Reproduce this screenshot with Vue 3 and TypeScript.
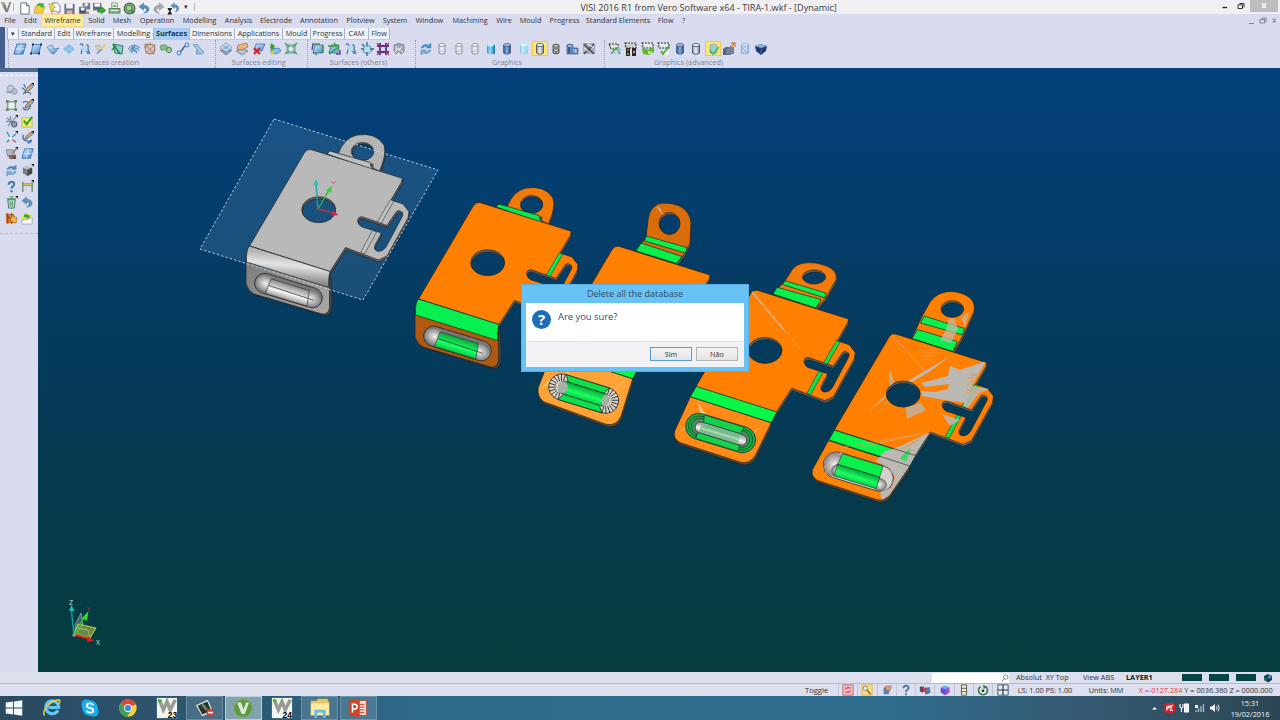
<script setup lang="ts">
import { ref } from 'vue'

interface Item {
  label: string
  w: number
  active?: boolean
}

interface Group {
  label: string
  w: number
  icons: string[]
  on?: number
}

const quickIcons = ['new', 'open', 'docs', 'save', 'saveall', 'export', 'print', 'preview', 'undo', 'redo', 'history']

const menus: Item[] = [
  { label: 'File', w: 20 },
  { label: 'Edit', w: 21 },
  { label: 'Wireframe', w: 43, active: true },
  { label: 'Solid', w: 25 },
  { label: 'Mesh', w: 26 },
  { label: 'Operation', w: 44 },
  { label: 'Modelling', w: 41 },
  { label: 'Analysis', w: 37 },
  { label: 'Electrode', w: 38 },
  { label: 'Annotation', w: 48 },
  { label: 'Plotview', w: 35 },
  { label: 'System', w: 34 },
  { label: 'Window', w: 35 },
  { label: 'Machining', w: 46 },
  { label: 'Wire', w: 22 },
  { label: 'Mould', w: 31 },
  { label: 'Progress', w: 37 },
  { label: 'Standard Elements', w: 70 },
  { label: 'Flow', w: 25 },
  { label: '?', w: 11 },
]

const tabs: Item[] = [
  { label: 'Standard', w: 36 },
  { label: 'Edit', w: 19 },
  { label: 'Wireframe', w: 40 },
  { label: 'Modelling', w: 40 },
  { label: 'Surfaces', w: 36, active: true },
  { label: 'Dimensions', w: 45 },
  { label: 'Applications', w: 48 },
  { label: 'Mould', w: 28 },
  { label: 'Progress', w: 34 },
  { label: 'CAM', w: 24 },
  { label: 'Flow', w: 21 },
]

const groups: Group[] = [
  {
    label: 'Surfaces creation',
    w: 207,
    icons: ['sheet', 'sheetpts', 'fold', 'diamond', 'loft', 'brush', 'greenframe', 'waves', 'net', 'sweep', 'link', 'pipes'],
  },
  { label: 'Surfaces editing', w: 92, icons: ['stack', 'stackhand', 'delsheet', 'extend', 'stretch'] },
  { label: 'Surfaces (others)', w: 108, icons: ['arrows1', 'arrows2', 'loft', 'cross', 'grid', 'blob'] },
  {
    label: 'Graphics',
    w: 189,
    icons: ['refresh', 'cyl0', 'cyl0', 'cyl0', 'cylcyan', 'cylblue', 'cylpale', 'cylgrey', 'cylmesh', 'cylpair', 'tools'],
    on: 7,
  },
  {
    label: 'Graphics (advanced)',
    w: 174,
    icons: ['cubenet', 'cubelight', 'cubegreen', 'cubecheck', 'cylblue', 'cylgrey', 'cylcheck', 'steps', 'cylpale2', 'cubeblue'],
    on: 6,
  },
]

const sideIcons = [
  'gears', 'pen', 'frame', 'pencurve', 'gearcut', 'check', 'axes', 'penarc', 'palette',
  'sheet', 'refresh', 'solid', 'help', 'dim', 'bin', 'undo', 'heat', 'landscape',
]

const statusIcons = ['redview', 'zoomy', 'hand', 'help', 'cubered', 'cubeviolet', 'list', 'spin', 'target']

const tasks = [
  { icon: 't-win' },
  { icon: 't-ie' },
  { icon: 't-skype' },
  { icon: 't-chrome' },
  { icon: 't-w', num: '23' },
  { icon: 't-cam', state: 'open' },
  { icon: 't-visi', state: 'focus' },
  { icon: 't-w', num: '24' },
  { icon: 't-files', state: 'open' },
  { icon: 't-ppt', state: 'open' },
]

// Stages with the front flange already bent
const bent = [
  { dx: 0, dy: 0, plate: '#b9b9b9', face: 'url(#g-steel)', roll: 'url(#g-rollgrey)', ear: '#b5b5b5', strip: '#c0c0c0', pill: 'url(#g-pillgrey)' },
  { dx: 169, dy: 53, plate: '#ff8000', face: '#b05a10', roll: '#08f050', ear: '#f07a08', strip: '#08e850', pill: 'url(#g-pillgreen)' },
]

// Flat stages, flap and pocket change a little from one to the next
const flat = [
  { dx: 307.7, dy: 96.7, flap: 'M244,256 L230.5,291 Q229,300 236,305 L298,327.500 Q309,330 313.500,319 L325,282Z', fill: '#ffa336', px: 276, py: 297, kind: 'ribs' },
  { dx: 446.3, dy: 140.7, flap: 'M244,256 L228.5,290 Q226,298 234,302 L294,321.500 Q303,324 309,315 L325,282Z', fill: '#ff8b16', px: 274.3, py: 292.3, kind: 'rings' },
  { dx: 584.5, dy: 184.4, flap: 'M244,256 L228,285 Q226,292 233,296 L293,315.500 Q301,317 305,310 L325,282Z', fill: '#ff8306', px: 273.8, py: 287.3, kind: 'smooth' },
]

const ears = [
  {
    d: 'M636,251 L646,237 L648.300,218 Q651,204 663,203 Q688,203 691,222 L690,243 L685,253 L676.500,264Z M659,223.500 a10.500,11 0 1 0 21,0 a10.500,11 0 1 0 -21,0Z',
    fill: '#d96d0c',
    strips: ['646,236 687,247.500 685.500,253 644.500,241', '641,243 682,256.500 676.500,263.500 636,251'],
  },
  {
    d: 'M773,294 L785,280.700 L793,268.500 Q800,261 816,263 Q838,267 836.500,279 L825.700,298 L815.700,308.500Z M802.500,277 a11.500,7 0 1 0 23,0 a11.500,7 0 1 0 -23,0Z',
    fill: '#f27b0c',
    strips: ['785,280.700 826,293 825,298 782.500,284.500', '777,287.300 821,299.500 815.700,308 773,294'],
  },
  {
    d: 'M912,338 L921.700,317 L930,302 Q938,290 955,291.700 Q977,296 974,311 L963.300,335 L953.300,352Z M941,309 a11.300,8.300 0 1 0 22.600,0 a11.300,8.300 0 1 0 -22.600,0Z',
    fill: '#ff8000',
    strips: ['924,316 964.500,328.500 962.500,335 920.500,323', '917.500,329.500 957.500,341.500 952.800,351.500 912,338.500'],
  },
]

// Short radial lines around the rounded ends of the ribbed pocket
const ribs = Array.from({ length: 22 }, (_, i) => {
  const left = i < 11
  const a = ((left ? 90 : -90) + (i % 11) * 18) * (Math.PI / 180)
  const cx = left ? -23 : 23
  return { x1: cx + 6 * Math.cos(a), y1: 6 * Math.sin(a), x2: cx + 13 * Math.cos(a), y2: 13 * Math.sin(a) }
})

const dialogOpen = ref(true)
</script>

<template>
  <div class="screen">
    <!-- Icon sheet -->
    <svg class="defs" width="0" height="0">
      <defs>
        <linearGradient id="g-blue" x1="0" y1="0" x2="1" y2="1">
          <stop offset="0" stop-color="#d4ecfc" />
          <stop offset="1" stop-color="#4a8ccc" />
        </linearGradient>
        <linearGradient id="g-cyl" x1="0" x2="1">
          <stop offset="0" stop-color="#2a4c86" />
          <stop offset="0.5" stop-color="#86b4e4" />
          <stop offset="1" stop-color="#20406e" />
        </linearGradient>
        <linearGradient id="g-cyan" x1="0" x2="1">
          <stop offset="0" stop-color="#2a98d4" />
          <stop offset="0.4" stop-color="#9adcf8" />
          <stop offset="1" stop-color="#1070b0" />
        </linearGradient>
        <linearGradient id="g-grey" x1="0" x2="1">
          <stop offset="0" stop-color="#8c98a4" />
          <stop offset="0.5" stop-color="#eef2f4" />
          <stop offset="1" stop-color="#707c88" />
        </linearGradient>
        <linearGradient id="g-steel" x1="0" y1="0" x2="1" y2="1">
          <stop offset="0" stop-color="#777" />
          <stop offset="1" stop-color="#aaa" />
        </linearGradient>
        <linearGradient id="g-rollgrey" x1="0.55" y1="0.2" x2="0.42" y2="0.85">
          <stop offset="0" stop-color="#b4b4b4" />
          <stop offset="0.4" stop-color="#e4e4e4" />
          <stop offset="1" stop-color="#808080" />
        </linearGradient>
        <linearGradient id="g-pillgrey" x1="0" y1="0" x2="0" y2="1">
          <stop offset="0" stop-color="#8a8a8a" />
          <stop offset="0.6" stop-color="#f4f4f4" />
          <stop offset="1" stop-color="#9a9a9a" />
        </linearGradient>
        <linearGradient id="g-pillgreen" x1="0" y1="0" x2="0" y2="1">
          <stop offset="0" stop-color="#06a83a" />
          <stop offset="0.6" stop-color="#1cff60" />
          <stop offset="1" stop-color="#08c848" />
        </linearGradient>
        <radialGradient id="g-dome">
          <stop offset="0" stop-color="#f4f0f0" />
          <stop offset="1" stop-color="#858383" />
        </radialGradient>
      </defs>

      <symbol id="visi" viewBox="0 0 14 14"><path d="M1,1H5L7.500,9L10,1H12L8.500,12H6Z" fill="#7c827c" /><path d="M1,1H5L6,4H2Z" fill="#a6b29c" /></symbol>
      <symbol id="new" viewBox="0 0 14 14"><path d="M3,1H9L12,4V13H3Z" fill="#fff" stroke="#5a6884" /><path d="M9,1V4H12" fill="#dde" stroke="#5a6884" /></symbol>
      <symbol id="open" viewBox="0 0 14 14"><path d="M1,12L3,4H7L8,5H13L10,12Z" fill="#f3cf3e" stroke="#b08a20" stroke-width=".6" /><path d="M4,4C5,0 9,1 10,2L12,1L11,6L7,5L9,3.500Z" fill="#38b030" /></symbol>
      <symbol id="docs" viewBox="0 0 14 14"><path d="M5,1H10L13,4V11H5Z" fill="#fff" stroke="#68748c" /><path d="M1,2H5L8,6L5,7L7,10H3Z" fill="#f4d04c" stroke="#a58a34" stroke-width=".5" /><path d="M4,10H11V13H4Z" fill="#eef" stroke="#68748c" stroke-width=".6" /></symbol>
      <symbol id="save" viewBox="0 0 14 14"><path d="M1.500,2H12.500V13H1.500Z" fill="#66738e" /><path d="M3.500,2H10.500V7H3.500Z" fill="#f4f4f8" /><path d="M4,9H10V13H4Z" fill="#d8b898" /></symbol>
      <symbol id="saveall" viewBox="0 0 14 14"><path d="M5,1H13V8H5Z" fill="#66738e" /><path d="M7,1.500H11V4H7Z" fill="#fff" /><path d="M1,5H9V13H1Z" fill="#4a5670" stroke="#e8e8f0" stroke-width=".6" /><path d="M3,6H7V9H3Z" fill="#fff" /><path d="M9,10H12V13H9Z" fill="#bb8850" /></symbol>
      <symbol id="export" viewBox="0 0 14 14"><path d="M0,1H9V9H0Z" fill="#60708a" /><path d="M1.500,1.500H7.500V5H1.500Z" fill="#fff" /><path d="M5,7H9V5L14,9L9,13V11H5Z" fill="#34a82e" stroke="#1d701a" stroke-width=".5" /></symbol>
      <symbol id="print" viewBox="0 0 14 14"><path d="M4,1H10V7H4Z" fill="#fff" stroke="#50885a" stroke-width=".8" /><path d="M5,3.500H9M5,5H9" stroke="#48a858" /><path d="M1,7H13V12H1Z" fill="#80bc88" stroke="#406048" stroke-width=".7" /><path d="M3,9H11" stroke="#e8ffe8" /></symbol>
      <symbol id="preview" viewBox="0 0 14 14"><circle cx="7" cy="7" r="5.800" fill="#78b070" stroke="#52605a" stroke-width="1.300" /><circle cx="6.500" cy="6.500" r="3" fill="#a9d3a0" stroke="#3f9040" /><path d="M9,9L12,12" stroke="#5c6458" stroke-width="2" /></symbol>
      <symbol id="undo" viewBox="0 0 14 14"><path d="M6,1L1,5L6,9V6.500C10,6.500 10,10 6,12C14,12 14,3.500 6,3.500Z" fill="#5d90c0" stroke="#45709c" stroke-width=".5" /></symbol>
      <symbol id="redo" viewBox="0 0 14 14"><path d="M8,1L13,5L8,9V6.500C4,6.500 4,10 8,12C0,12 0,3.500 8,3.500Z" fill="#a8acb0" stroke="#83888e" stroke-width=".5" /></symbol>
      <symbol id="history" viewBox="0 0 14 14"><path d="M8,1L4,4L8,7V5.500C11,5.500 11,9 9,11C14,10 14,3 8,3Z" fill="#5d90c0" stroke="#45709c" stroke-width=".4" /><path d="M1,7H5L3,10L5,13H1L3,10Z" fill="#222" stroke="#222" /></symbol>

      <symbol id="sheet" viewBox="0 0 14 14"><path d="M4,2H13L10,12H1Z" fill="url(#g-blue)" stroke="#2b63a8" stroke-width=".9" /><path d="M8.500,2L5.500,12M2.500,7H11.500" stroke="#f6fbff" stroke-width=".7" /></symbol>
      <symbol id="sheetpts" viewBox="0 0 14 14"><path d="M4,2.500H12L10,11.500H2Z" fill="url(#g-blue)" stroke="#2b63a8" stroke-width=".7" /><path d="M3,1.500h2v2h-2zM11,1.500h2v2h-2zM1,10.500h2v2h-2zM9,10.500h2v2h-2z" fill="#1c3354" /></symbol>
      <symbol id="fold" viewBox="0 0 14 14"><path d="M1,5L6,3L8,7L13,6L8,12Q4,12 3,8Z" fill="url(#g-blue)" stroke="#4a82a8" stroke-width=".7" /></symbol>
      <symbol id="diamond" viewBox="0 0 14 14"><path d="M7,2L13,7L7,12L1,7Z" fill="#82bce8" stroke="#a8d0f0" /><path d="M4,4.500L10,9.500M10,4.500L4,9.500" stroke="#b8dcf4" stroke-width=".6" /></symbol>
      <symbol id="loft" viewBox="0 0 14 14"><path d="M2,3Q4,0 5,4L3,12M8,3Q11,2 10,7L12,12M5,6L9,10" fill="none" stroke="#4a78a8" stroke-width="1.300" /><path d="M3,4L8,4L9,9L5,10Z" fill="#b8dcf0" /><path d="M9,9h3v3h-3z" fill="#5890c0" /></symbol>
      <symbol id="brush" viewBox="0 0 14 14"><path d="M1,4L5,3L8,7L5,9Z" fill="#d8d8a0" stroke="#8894a0" stroke-width=".5" /><path d="M7,8L12,2" stroke="#e8d070" stroke-width="2" /><path d="M3,12Q5,8 8,8" fill="none" stroke="#6898c8" stroke-width="1.500" /></symbol>
      <symbol id="greenframe" viewBox="0 0 14 14"><path d="M2,2L12,4L11,12L4,11Z" fill="#92c8e8" stroke="#2a7c48" stroke-width="1" /><path d="M2,2L9,12M1,8L5,4" stroke="#208c34" stroke-width="1.500" /></symbol>
      <symbol id="waves" viewBox="0 0 14 14"><path d="M1,7L8,2L13,7L7,12Z" fill="#b4d4ec" /><path d="M1,7Q6,0 13,6M2,9Q6,3 12,8M4,11Q7,6 10,10M4,4L10,11M8,3L4,10" fill="none" stroke="#3c7ab4" stroke-width=".9" /></symbol>
      <symbol id="net" viewBox="0 0 14 14"><path d="M2,2L12,3L11,12L3,11Z" fill="#c8ccd8" stroke="#b07c58" /><path d="M2,2L11,12M12,3L3,11M1,6L8,1M6,13L13,7" stroke="#c07848" stroke-width="1" /></symbol>
      <symbol id="sweep" viewBox="0 0 14 14"><path d="M1,4Q6,1 9,5L12,6L10,11L7,8H2Z" fill="#7cc47c" stroke="#5a8a70" stroke-width=".7" /><circle cx="10" cy="8" r="2.500" fill="#a8d0a0" stroke="#4a785c" /></symbol>
      <symbol id="link" viewBox="0 0 14 14"><path d="M3,11L6,8L8,5L11,3" fill="none" stroke="#3c608c" stroke-width="1.500" /><circle cx="11" cy="3" r="2" fill="#cbe2f8" stroke="#3c78b4" /><circle cx="3" cy="11" r="2" fill="#cbe2f8" stroke="#3c78b4" /></symbol>
      <symbol id="pipes" viewBox="0 0 14 14"><path d="M1,3Q6,1 8,5L12,10L10,12H4L5,7Z" fill="#8cb8dc" stroke="#6080a4" stroke-width=".6" /><path d="M3,3L10,11M6,3L12,9" stroke="#e0f0fc" stroke-width=".7" /></symbol>
      <symbol id="stack" viewBox="0 0 14 14"><path d="M1,8L7,13L13,8L7,9Z" fill="#8ca4c0" stroke="#5c7088" stroke-width=".7" /><path d="M7,1L13,5.500L7,10L1,5.500Z" fill="#e6ecf4" stroke="#5c7088" stroke-width=".7" /><ellipse cx="7" cy="5.500" rx="3" ry="2" fill="#88b4e0" /></symbol>
      <symbol id="stackhand" viewBox="0 0 14 14"><path d="M1,9L7,13L13,9L8,7Z" fill="#b4c4d8" stroke="#5c7088" stroke-width=".7" /><path d="M3,3L12,1L13,5L7,8L2,7Z" fill="#eab478" stroke="#a06c38" stroke-width=".7" /></symbol>
      <symbol id="delsheet" viewBox="0 0 14 14"><path d="M4,2H13L10,9H2Z" fill="url(#g-blue)" stroke="#3c64a0" stroke-width=".7" /><path d="M2,6L8,12M8,6L2,12" stroke="#d42424" stroke-width="2.200" /></symbol>
      <symbol id="extend" viewBox="0 0 14 14"><path d="M3,7L11,6L13,9L8,12L3,11Z" fill="#88c0e4" stroke="#3a70a0" stroke-width=".7" /><path d="M3,1L7,4L5,8L2,6Z" fill="#38a038" /><circle cx="4" cy="11" r="1.800" fill="#e8c440" /></symbol>
      <symbol id="stretch" viewBox="0 0 14 14"><path d="M3,3H11V11H3Z" fill="#9cc4cc" stroke="#56848c" stroke-width=".7" /><path d="M1,1L5,5M13,1L9,5M1,12L5,9M13,12L9,9" stroke="#48a048" stroke-width="1.500" /><circle cx="7" cy="7" r="2" fill="#e8f0e0" /></symbol>
      <symbol id="arrows1" viewBox="0 0 14 14"><path d="M4,3H12L11,11H2Z" fill="url(#g-blue)" stroke="#2a50a0" stroke-width=".7" /><path d="M1,2H9M12,3V11M2,10L6,13" stroke="#30a040" stroke-width="1.500" /><path d="M2,2L1,8" stroke="#6440a0" stroke-width="1.400" /></symbol>
      <symbol id="arrows2" viewBox="0 0 14 14"><path d="M4,3H12L11,11H2Z" fill="#80b8e0" stroke="#306a54" stroke-width=".7" /><path d="M1,4H10L7,1M2,12L12,5" stroke="#30a040" stroke-width="1.500" fill="none" /><path d="M9,12H13V8" stroke="#6440a0" stroke-width="1.500" fill="none" /></symbol>
      <symbol id="cross" viewBox="0 0 14 14"><path d="M4,4H10L12,9L8,12L3,10Z" fill="#b0dcf0" stroke="#4080b0" stroke-width=".7" /><path d="M7,0V4M7,10V14M1,7H4M10,7H14M2,2L4,4" stroke="#386494" stroke-width="1.300" /></symbol>
      <symbol id="grid" viewBox="0 0 14 14"><path d="M4,1V13M10,1V13M1,4H13M1,10H13" stroke="#48308c" stroke-width="1.800" /><path d="M1,1L5,5M13,1L9,5M1,13L5,9M13,13L9,9" stroke="#c03454" stroke-width="1.200" /></symbol>
      <symbol id="blob" viewBox="0 0 14 14"><path d="M2,3Q7,0 12,3V10L9,12L7,9L4,12L2,9Z" fill="#a0a4ac" stroke="#6c7078" stroke-width=".7" /><path d="M4,4V8L7,6V9L10,4M2,11L5,8M9,8L12,12" fill="none" stroke="#f0f0f4" /></symbol>
      <symbol id="refresh" viewBox="0 0 14 14"><path d="M2,6Q4,1 10,3L12,1V6H7L9,5Q6,3 4,6Z" fill="#4c90cc" stroke="#3470a4" stroke-width=".4" /><path d="M12,8Q10,13 4,11L2,13V8H7L5,9Q8,11 10,8Z" fill="#7cb4e0" stroke="#3470a4" stroke-width=".4" /></symbol>
      <symbol id="cyl0" viewBox="0 0 14 14"><path d="M4,3V11Q7,13.500 10,11V3" fill="#e9ebf4" stroke="#777c88" stroke-width=".8" /><ellipse cx="7" cy="3" rx="3" ry="1.500" fill="#fff" stroke="#777c88" stroke-width=".8" /><path d="M4,9.500Q7,8 10,9.500" fill="none" stroke="#9aa" stroke-width=".7" /></symbol>
      <symbol id="cylcyan" viewBox="0 0 14 14"><path d="M3,3V11Q6,13 9,12H11V3Q7,1 3,3Z" fill="url(#g-cyan)" /><ellipse cx="6.500" cy="3" rx="3.500" ry="1.400" fill="#c0ecfc" /></symbol>
      <symbol id="cylblue" viewBox="0 0 14 14"><path d="M3.500,3V11Q7,14 10.500,11V3Z" fill="url(#g-cyl)" stroke="#243c64" stroke-width=".5" /><ellipse cx="7" cy="3" rx="3.500" ry="1.600" fill="#9cc0e8" stroke="#243c64" stroke-width=".6" /></symbol>
      <symbol id="cylpale" viewBox="0 0 14 14"><path d="M3.500,3V11Q7,13 10.500,11V3Z" fill="#a4dcf0" stroke="#7cc4e0" stroke-width=".6" /><ellipse cx="7" cy="3" rx="3.500" ry="1.500" fill="#d4f4fc" /><path d="M6,5V12" stroke="#dcf8fc" /></symbol>
      <symbol id="cylpale2" viewBox="0 0 14 14"><path d="M3.500,3V11Q7,13 10.500,11V3Z" fill="#a4c4e4" stroke="#6884a8" stroke-width=".6" /><path d="M4,4L10,9M10,4L4,9M4,9L8,12" stroke="#e8f4fc" stroke-width=".7" /><ellipse cx="7" cy="3" rx="3.500" ry="1.500" fill="#d4ecfc" stroke="#6884a8" stroke-width=".5" /></symbol>
      <symbol id="cylgrey" viewBox="0 0 14 14"><path d="M3.500,3V11Q7,14 10.500,11V3Z" fill="url(#g-grey)" stroke="#384860" stroke-width=".8" /><ellipse cx="7" cy="3" rx="3.500" ry="1.600" fill="#eef4f8" stroke="#384860" stroke-width=".8" /></symbol>
      <symbol id="cylmesh" viewBox="0 0 14 14"><path d="M4,3V11Q7,13 10,11V3Q7,1 4,3Z" fill="#b4b8b4" stroke="#383c3c" stroke-width=".8" /><path d="M4,4L10,8M10,4L4,8M4,8L9,12M10,8L5,12" stroke="#404444" stroke-width=".6" /></symbol>
      <symbol id="cylpair" viewBox="0 0 14 14"><path d="M2,3Q5,1 8,3V6H13V12H2Z" fill="#5e88b8" stroke="#2c4c80" stroke-width=".6" /><path d="M3,4H7M8,8H12M9,10H12" stroke="#cce0f4" /><path d="M4,5V11" stroke="#2c4c80" stroke-width="1.500" /></symbol>
      <symbol id="tools" viewBox="0 0 14 14"><path d="M1,1H13V12H1Z" fill="#a6acb8" /><path d="M2,2L12,12M12,2L2,12" stroke="#40444c" stroke-width="1.400" /><path d="M6,2L12,6M2,6L6,9" stroke="#fff" /></symbol>
      <symbol id="cubenet" viewBox="0 0 14 14"><path d="M1,2H10V7H3Z" fill="#dfe4dc" stroke="#333" stroke-width="1.100" stroke-dasharray="2 1" /><path d="M3,12L8,6L12,12" stroke="#48a848" fill="none" stroke-width="1.500" /><circle cx="11" cy="8" r="2" fill="#88bce4" /><circle cx="7" cy="11" r="1.500" fill="#a8cce8" /></symbol>
      <symbol id="cubelight" viewBox="0 0 14 14"><path d="M1,1H12V6H2Z" fill="#c8d4c4" stroke="#333" stroke-width="1.100" stroke-dasharray="2 1" /><path d="M2,6h4v8h-4zM8,6h4v8h-4z" fill="#282828" /><circle cx="4" cy="8" r="1.200" fill="#e04030" /><circle cx="4" cy="12" r="1.200" fill="#38b048" /><circle cx="10" cy="10" r="1.200" fill="#d89878" /></symbol>
      <symbol id="cubegreen" viewBox="0 0 14 14"><path d="M1,1H12V6H2Z" fill="#e4e8e4" stroke="#333" stroke-width="1.100" stroke-dasharray="2 1" /><path d="M1,6L7,8L13,4V10L8,13L2,12Z" fill="#58b830" /><path d="M7,9h4v3h-4z" fill="#d8dc48" /></symbol>
      <symbol id="cubecheck" viewBox="0 0 14 14"><path d="M1,1H12V6H2Z" fill="#e4e8e4" stroke="#333" stroke-width="1.100" stroke-dasharray="2 1" /><path d="M4,9L6,12L12,4" fill="none" stroke="#50b030" stroke-width="1.600" /><path d="M8,10h4v3h-4z" fill="#f0f0e8" /></symbol>
      <symbol id="cylcheck" viewBox="0 0 14 14"><path d="M4,3Q7,1 11,3V11Q7,13 4,11Z" fill="#98d0d8" stroke="#80ac90" stroke-width=".7" /><path d="M4,8L7,12L13,5" fill="none" stroke="#50b870" stroke-width="1.800" /></symbol>
      <symbol id="steps" viewBox="0 0 14 14"><path d="M1,7L4,5H8L9,3V13H1Z" fill="#566680" /><path d="M4,7L9,5H12V12H4Z" fill="#72829c" /><path d="M8,6L12,2M9,1H13V5" stroke="#d47c30" fill="none" stroke-width="1.300" /></symbol>
      <symbol id="cubeblue" viewBox="0 0 14 14"><path d="M1,4L7,2L13,4L12,9L7,13L2,9Z" fill="#203c6c" /><path d="M1,4L7,2L13,4L7,6Z" fill="#88b8e0" /><path d="M7,6V13" stroke="#4068a8" /></symbol>

      <symbol id="gears" viewBox="0 0 14 14"><circle cx="6" cy="6" r="3.500" fill="#c8d0dc" stroke="#8a96aa" /><circle cx="10" cy="9" r="3" fill="#b4c0d0" stroke="#8a96aa" /><path d="M1,10H7" stroke="#8898b0" stroke-width="1.500" /></symbol>
      <symbol id="pen" viewBox="0 0 14 14"><path d="M1,5L11,12M2,12L6,8M3,1L5,5" stroke="#3c78b8" stroke-width="1.300" /><path d="M4,11L6,6L11,1L13,4L7,10Z" fill="#c8a880" stroke="#4a3c30" stroke-width=".7" /><path d="M11,0H14V3Z" fill="#111" /></symbol>
      <symbol id="pencurve" viewBox="0 0 14 14"><path d="M2,4Q5,1 8,4Q12,8 8,11Q3,13 2,9" fill="none" stroke="#3c78b8" stroke-width="1.500" /><path d="M4,10L6,6L11,1L13,4L7,9Z" fill="#c8a880" stroke="#4a3c30" stroke-width=".7" /><path d="M11,0H14V3Z" fill="#111" /></symbol>
      <symbol id="penarc" viewBox="0 0 14 14"><path d="M3,4Q1,8 4,10T11,10Q11,13 7,13" fill="none" stroke="#3c78b8" stroke-width="1.500" /><path d="M4,9L6,5L11,1L13,3L7,8Z" fill="#c8a880" stroke="#4a3c30" stroke-width=".7" /><path d="M11,0H14V3Z" fill="#111" /></symbol>
      <symbol id="frame" viewBox="0 0 14 14"><path d="M3,3H11V11H3Z" fill="#e6f2ea" stroke="#508060" /><path d="M1,1h3v3h-3zM10,1h3v3h-3zM1,10h3v3h-3zM10,10h3v3h-3z" fill="#68886c" /></symbol>
      <symbol id="gearcut" viewBox="0 0 14 14"><path d="M2,3L12,11M12,2L3,12M6,1V9M1,7H9" stroke="#8090a8" stroke-width="1.500" /><circle cx="10" cy="10" r="3" fill="#909cac" stroke="#485468" /><path d="M11,0H14V3Z" fill="#111" /></symbol>
      <symbol id="check" viewBox="0 0 14 14"><path d="M1,3H12V13H1Z" fill="#f4ec70" stroke="#b4a848" stroke-width=".7" /><path d="M3,6L6,10L12,2" fill="none" stroke="#34a028" stroke-width="2.200" /></symbol>
      <symbol id="axes" viewBox="0 0 14 14"><path d="M2,1L6,8L12,3" fill="none" stroke="#3a94c0" stroke-width="1.400" /><path d="M6,8L2,12" stroke="#38a850" stroke-width="1.600" /><path d="M6,8L12,12" stroke="#c04848" stroke-width="1.300" /><circle cx="6" cy="8" r="2" fill="#eef" /><path d="M11,0H14V3Z" fill="#111" /></symbol>
      <symbol id="palette" viewBox="0 0 14 14"><path d="M1,3L9,3L11,10L3,10Z" fill="#b0b8c8" stroke="#687084" stroke-width=".7" /><path d="M4,9H12V13H5Z" fill="#6c5448" /><path d="M8,7L12,2" stroke="#a88060" stroke-width="1.800" /><path d="M5,11H8" stroke="#e07878" /><path d="M11,0H14V3Z" fill="#111" /></symbol>
      <symbol id="solid" viewBox="0 0 14 14"><path d="M2,4L7,2L12,4V10L7,13L2,10Z" fill="#7a7e82" /><path d="M2,4L7,2L12,4L7,6Z" fill="#c4c8cc" /><path d="M7,6L12,4V10L7,13Z" fill="#44484c" /><path d="M11,0H14V3Z" fill="#111" /></symbol>
      <symbol id="help" viewBox="0 0 14 14"><path d="M4,5Q4,2 7,2Q10,2 10,4.500Q10,6 8,7Q7,8 7,9.500" fill="none" stroke="#4c7cac" stroke-width="2.200" /><circle cx="7" cy="12" r="1.300" fill="#4c7cac" /></symbol>
      <symbol id="dim" viewBox="0 0 14 14"><path d="M2,2V13M12,2V13" stroke="#5c7c48" stroke-width="1.200" /><path d="M2,4H12V6H2Z" fill="#d8d068" stroke="#647448" stroke-width=".6" /><path d="M11,0H14V3Z" fill="#111" /></symbol>
      <symbol id="bin" viewBox="0 0 14 14"><path d="M3,4H11L10,13H4Z" fill="#b8d8c8" stroke="#40785c" /><path d="M2,3H12M5,1H9" stroke="#3c9c5c" stroke-width="1.400" /><path d="M6,6V11M8,6V11" stroke="#50886c" /><path d="M11,0H14V3Z" fill="#111" /></symbol>
      <symbol id="heat" viewBox="0 0 14 14"><path d="M1,2H10V12H1Z" fill="#d87830" /><path d="M1,2L10,12M3,1V13M7,1V13" stroke="#803c28" /><path d="M7,4L13,6L12,12L6,10Z" fill="#f4b048" stroke="#905c30" stroke-width=".6" /></symbol>
      <symbol id="landscape" viewBox="0 0 14 14"><path d="M1,5Q4,1 8,2L12,5V9H1Z" fill="#e8dc48" /><path d="M4,2L10,4L8,7L3,5Z" fill="#38a840" /><path d="M1,9L7,8L12,6V13H1Z" fill="#f6f8f8" stroke="#7c8c98" stroke-width=".6" /></symbol>

      <symbol id="redview" viewBox="0 0 14 14"><path d="M1,1H13V13H1Z" fill="#f2b8c0" stroke="#a86c78" /><path d="M4,6Q6,3 10,5M10,8Q8,11 4,9" fill="none" stroke="#cc4458" stroke-width="1.400" /></symbol>
      <symbol id="zoomy" viewBox="0 0 14 14"><path d="M1,1H13V13H1Z" fill="#f8dc80" stroke="#e0b848" /><circle cx="5" cy="5" r="2.500" fill="#e6f4fc" stroke="#80766c" /><path d="M7,7L11,12" stroke="#946848" stroke-width="1.800" /></symbol>
      <symbol id="hand" viewBox="0 0 14 14"><path d="M3,4H11L9,12H3Z" fill="#5880b8" /><path d="M5,3L12,2L11,7L6,8Z" fill="#dca070" stroke="#8c6044" stroke-width=".6" /></symbol>
      <symbol id="cubered" viewBox="0 0 14 14"><path d="M1,3H6V9H1Z" fill="#3c5074" /><path d="M6,6L12,4L13,10L8,12Z" fill="#4888c8" stroke="#243c60" stroke-width=".6" /><path d="M3,4L9,10M9,4L3,10" stroke="#c83038" stroke-width="1.800" /></symbol>
      <symbol id="cubeviolet" viewBox="0 0 14 14"><path d="M2,4L7,2L12,4V10L7,13L2,10Z" fill="#6848d0" /><path d="M2,4L7,2L12,4L7,6Z" fill="#58c0f0" /><path d="M7,6L12,4V10L7,13Z" fill="#a050d8" /></symbol>
      <symbol id="list" viewBox="0 0 14 14"><path d="M4,1H10V13H4Z" fill="#f6ecc8" stroke="#4c4c44" /><path d="M4,5H10M4,9H10" stroke="#4c4c44" /></symbol>
      <symbol id="spin" viewBox="0 0 14 14"><path d="M4,3A5.300,5.300 0 1 0 10,3" fill="none" stroke="#287838" stroke-width="1.700" /><path d="M7,1L11,3L8,6Z" fill="#287838" /><circle cx="7" cy="8" r="1.500" fill="#333" /></symbol>
      <symbol id="target" viewBox="0 0 14 14"><path d="M1,1H13V13H1Z" fill="#e4ecf4" stroke="#3c4858" /><path d="M7,1V13M1,7H13" stroke="#202c44" stroke-width="1.300" /></symbol>

      <symbol id="t-win" viewBox="0 0 24 24"><path d="M3,6L11,5V11.500H3ZM12,4.800L21,3.500V11.500H12ZM3,12.500H11V19L3,18ZM12,12.500H21V20.500L12,19.200Z" fill="#f4fafc" /></symbol>
      <symbol id="t-ie" viewBox="0 0 24 24"><path d="M18.500,14.500A7,7 0 1 1 19.300,11.500H8" fill="none" stroke="#62c8f6" stroke-width="3.400" /><path d="M4,20C0,16 10,4 19,3C22,3 20,7 19,8" fill="none" stroke="#f4cf46" stroke-width="1.600" /></symbol>
      <symbol id="t-skype" viewBox="0 0 24 24"><circle cx="8" cy="8" r="5.500" fill="#18a6e4" /><circle cx="16" cy="16" r="5.500" fill="#18a6e4" /><circle cx="12" cy="12" r="8.500" fill="#18b0f0" /><path d="M15.500,9Q14,7 12,7Q8.500,7 8.500,9.300Q8.500,11.300 12,12Q15.500,12.500 15.500,14.700Q15.500,17 12,17Q9.300,17 8.300,15" fill="none" stroke="#fff" stroke-width="2" /></symbol>
      <symbol id="t-chrome" viewBox="0 0 24 24"><circle cx="12" cy="12" r="9.500" fill="#f4cf3c" /><path d="M12,12L3.800,7.300A9.500,9.500 0 0 1 20.500,8Z" fill="#dc4638" /><path d="M12,12L3.800,7.300A9.500,9.500 0 0 0 11,21.500L15.500,14Z" fill="#38a154" /><circle cx="12" cy="12" r="4.500" fill="#f6f6f6" /><circle cx="12" cy="12" r="3.400" fill="#4486e4" /></symbol>
      <symbol id="t-w" viewBox="0 0 24 24"><path d="M1,1H23V23H1Z" fill="#f3f5f1" /><path d="M4,4L8,14L12,5L15.500,14L21,3" fill="none" stroke="#969b94" stroke-width="3.800" /><circle cx="4" cy="4" r="2.200" fill="#58b738" /></symbol>
      <symbol id="t-cam" viewBox="0 0 24 24"><path d="M2,9L15,3L21,16L9,21Z" fill="#e6e6e0" /><path d="M4,9.500L14.500,5L19,15L9,19Z" fill="#2b342d" /><path d="M9,8L14,14" stroke="#71806c" stroke-width="3" /><circle cx="18" cy="17" r="4.300" fill="#d93b39" /><path d="M15.500,17H20.500" stroke="#fff" stroke-width="1.800" /></symbol>
      <symbol id="t-visi" viewBox="0 0 24 24"><circle cx="12" cy="12" r="10.300" fill="#5c9a45" stroke="#8bac74" stroke-width="1.300" /><path d="M5.500,6H10L12.500,13.500L15.500,6H18.500L14,18.500H10.500Z" fill="#dfe8d6" /></symbol>
      <symbol id="t-files" viewBox="0 0 24 24"><path d="M2,4H8L10,2H20L22,6V20H2Z" fill="#e5c75f" /><path d="M2,7H22V20H2Z" fill="#fbeaa0" /><path d="M6,23V14H18V23H15V17H9V23Z" fill="#68b8e8" /></symbol>
      <symbol id="t-ppt" viewBox="0 0 24 24"><path d="M11,4H21V20H11Z" fill="#f8eeeb" stroke="#c64a31" /><path d="M14,8H19M14,11H19M14,14H19M14,17H19" stroke="#d05538" stroke-width="1.500" /><path d="M2,4L14,2V22L2,20Z" fill="#d14428" /><path d="M6,17V8H8.500Q11,8 11,10.500Q11,13 8.500,13H6" fill="none" stroke="#fff" stroke-width="1.700" /></symbol>
    </svg>

    <header class="titlebar">
      <svg class="ic brand"><use href="#visi" /></svg>
      <i class="rule" />
      <div class="quick">
        <svg v-for="q in quickIcons" :key="q" class="ic"><use :href="'#' + q" /></svg>
      </div>
      <span class="more">▾</span>
      <i class="rule" />
      <h1>VISI 2016 R1 from Vero Software x64 - TIRA-1.wkf - [Dynamic]</h1>
      <svg class="winbtns" width="60" height="14" viewBox="0 0 60 14">
        <path d="M30,0H58V12H30Z" fill="#bdbdbd" />
        <path d="M2.500,7.500H7" stroke="#222" stroke-width="1.300" />
        <path d="M19.500,3.500H24V7.500M18,4.800H22.500V8.500H18Z" fill="none" stroke="#333" />
        <path d="M42,3.500L46,8M46,3.500L42,8" stroke="#fff" stroke-width="1.400" />
      </svg>
    </header>

    <nav class="menubar">
      <span v-for="m in menus" :key="m.label" :class="{ active: m.active }" :style="{ width: m.w + 'px' }">{{ m.label }}</span>
      <svg class="childbtns" width="34" height="13" viewBox="0 0 34 13">
        <path d="M3,9.500H8M15.500,4H20V8M14,5.500H18.500V9H14ZM26.500,4.500L30,8.500M30,4.500L26.500,8.500" fill="none" stroke="#84878f" stroke-width="1.100" />
      </svg>
    </nav>

    <section class="ribbon">
      <div class="edge" />
      <div class="ribbon-body">
        <div class="tabs">
          <span class="drop">▾</span>
          <span v-for="t in tabs" :key="t.label" :class="{ active: t.active }" :style="{ width: t.w + 'px' }">{{ t.label }}</span>
        </div>
        <div class="groups">
          <div v-for="g in groups" :key="g.label" class="group" :style="{ width: g.w + 'px' }">
            <div class="tools">
              <span v-for="(ic, i) in g.icons" :key="i" class="tool" :class="{ on: g.on === i }">
                <svg class="ic"><use :href="'#' + ic" /></svg>
              </span>
            </div>
            <div class="caption">{{ g.label }}</div>
          </div>
        </div>
      </div>
    </section>

    <main class="work">
      <aside class="side">
        <div class="side-tools">
          <svg v-for="s in sideIcons" :key="s" class="ic"><use :href="'#' + s" /></svg>
        </div>
      </aside>

      <div class="viewport">
        <svg width="1242" height="604" viewBox="38 68 1242 604">
          <defs>
            <path
              id="plate"
              fill-rule="evenodd"
              clip-rule="evenodd"
              d="M304.500,152.500 Q307,149 311,149.500 L402.300,178.300 L401.500,182 L391,200 L403,204 L409,211.700 L408,218 L387,256 L378.500,260 L345.500,247.500 L330,271.500 L249.500,246Z M301.700,209.700 a17,13 0 1 0 34,0 a17,13 0 1 0 -34,0Z M363,217 L387,225.500 L396.500,211.500 Q399,209.300 402.300,212.300 Q403.500,214 402,217 L386,247 Q382,252.500 376.500,251 Q373.300,249 375,245 L381.500,233 L361,226.500 Q356,222 358.500,218 Q360,216.300 363,217Z"
            />
            <path
              id="earbent"
              fill-rule="evenodd"
              d="M338,154 Q344,138 357,135 Q376,132 384,145 Q387,154 379.500,171Z M351.400,151.500 a11.200,9 0 1 0 22.400,0 a11.200,9 0 1 0 -22.400,0Z"
            />
            <path id="tabfold" d="M390.300,199.800 L393.800,201 L381,223.500 L377.300,222Z M372.500,230.500 L376.500,232 L364.500,254 L360.700,252.500Z" />
            <clipPath id="laststage">
              <use href="#plate" transform="translate(584.5 184.4)" />
              <path d="M834,430L915,456L909,467L889.500,495Q886,501 878,499.500L811,478Z" />
            </clipPath>
          </defs>

          <!-- Bent stages -->
          <g v-for="(p, i) in bent" :key="'b' + i" :transform="`translate(${p.dx} ${p.dy})`" stroke="#1c2226" stroke-width=".7">
            <path v-if="i === 0" d="M274,119L438,170L363,300L200,249Z" fill="#5a8cb4" fill-opacity=".25" stroke="none" />
            <use href="#earbent" fill="#5c5c5c" transform="translate(0.6 1.600)" />
            <use href="#earbent" :fill="p.ear" />
            <path d="M330,151L370,162.500L373,170L327,154Z" :fill="p.strip" />
            <path d="M370,166Q370,162 373.500,164L373.500,169.500Z" fill="#554a44" stroke="none" />
            <use href="#plate" fill="#626262" transform="translate(0.5 2.200)" />
            <use href="#plate" :fill="p.plate" />
            <use href="#tabfold" :fill="p.strip" stroke-width=".5" />
            <path d="M249.300,246L246,255V284Q248,291 254,294L322,314.500Q329,316 330.500,309L331.500,300L329.500,272Z" fill="#454545" transform="translate(1 .8)" />
            <path d="M249.300,246L246,255V284Q248,291 254,294L322,314Q328,315 329.500,308L329.500,272Z" :fill="p.face" />
            <path d="M249.300,246Q246,250 246.500,262L328.500,287.500Q328,278 330,271.500Z" :fill="p.roll" />
            <g transform="translate(288.500 290.500) rotate(17)">
              <rect x="-35" y="-10" width="70" height="20" rx="10" fill="#777" />
              <ellipse cx="-24" cy="0" rx="10" ry="8" fill="url(#g-dome)" stroke="none" />
              <ellipse cx="23" cy="1.500" rx="11" ry="8" fill="url(#g-dome)" stroke="none" />
              <path d="M-20,-6H20L22,9.500H-21Z" :fill="p.pill" stroke-width=".5" />
              <path d="M-20,1L27,2" fill="none" stroke-width=".6" />
            </g>
          </g>

          <!-- Flat stages -->
          <g v-for="(e, i) in ears" :key="'e' + i" stroke="#1c2226" stroke-width=".7">
            <path :d="e.d" fill="#6b6560" fill-rule="evenodd" transform="translate(.6 2)" />
            <path :d="e.d" :fill="e.fill" fill-rule="evenodd" />
            <polygon v-for="s in e.strips" :key="s" :points="s" fill="#08f04c" />
          </g>
          <g v-for="(p, i) in flat" :key="'f' + i" :transform="`translate(${p.dx} ${p.dy})`" stroke="#1c2226" stroke-width=".7">
            <path :d="p.flap" fill="#5c4a38" transform="translate(.8 2.200)" />
            <use href="#plate" fill="#5e6468" transform="translate(0.5 2.200)" />
            <path :d="p.flap" :fill="p.fill" />
            <use href="#plate" fill="#ff8000" />
            <use href="#tabfold" fill="#10e050" stroke-width=".5" />
            <path d="M250,245.700L330.700,271.300L325,282L244,256Z" fill="#08f84a" />
            <g v-if="i < 2" fill="#ffd9a0" fill-opacity=".7" stroke="none">
              <path d="M232,293L246,279L241,287ZM295,300L318,284L303,296ZM252,262L262,277L254,274Z" />
            </g>
            <g :transform="`translate(${p.px} ${p.py}) rotate(17)`">
              <rect x="-36" y="-13" width="72" height="26" rx="13" :fill="p.kind === 'smooth' ? '#d4d0d0' : p.kind === 'ribs' ? '#dcd4c8' : '#14b044'" />
              <template v-if="p.kind === 'ribs'">
                <path d="M-22,-13H23L19,-6H-18ZM-19,6H18L23,13H-23Z" fill="#0ce04a" />
                <rect x="-26" y="-6.500" width="52" height="13" rx="6" fill="url(#g-pillgreen)" />
                <ellipse cx="-22" cy="0" rx="5" ry="6" fill="#a7b0a7" stroke="none" />
                <ellipse cx="23" cy="0" rx="4" ry="6" fill="#a7b0a7" stroke="none" />
                <line v-for="(r, n) in ribs" :key="n" v-bind="r" stroke-width=".8" />
              </template>
              <template v-else-if="p.kind === 'rings'">
                <rect x="-33" y="-10.500" width="66" height="21" rx="10.500" fill="none" stroke-width=".6" />
                <rect x="-30" y="-8.500" width="60" height="17" rx="8.500" fill="#4e8f62" stroke-width=".6" />
                <path d="M-21,-12.500H21L19,-5H-19ZM-22,6H22L22,12.500H-22Z" fill="#14d24c" stroke-width=".5" />
                <rect x="-26" y="-5" width="53" height="11" rx="5" fill="url(#g-pillgrey)" stroke-width=".6" />
                <path d="M-20,-4.500H20L19,5.500H-21Z" fill="#7cb98c" stroke="none" />
                <path d="M-20,1H20" stroke="#a4d8b0" stroke-width="2.500" />
              </template>
              <template v-else>
                <ellipse cx="-25" cy="0" rx="10.500" ry="12" fill="url(#g-dome)" stroke="none" />
                <ellipse cx="-20" cy="5" rx="6" ry="6" fill="url(#g-dome)" stroke-width=".4" />
                <ellipse cx="24" cy="6" rx="7" ry="6" fill="url(#g-dome)" stroke-width=".4" />
                <path d="M-20,-12.500H22L22,-1H-22Z" fill="#0cf04c" stroke-width=".5" />
                <path d="M-22,-1H22L22,11H-22Z" fill="url(#g-pillgreen)" stroke-width=".5" />
              </template>
            </g>
          </g>

          <!-- Surface overlap streaks -->
          <path d="M752,292L785,331" stroke="#d5b192" stroke-width="1.600" stroke-dasharray="9 1" />
          <path d="M785,331L800,348" stroke="#e0a66c" stroke-width=".8" stroke-dasharray="3 2" />
          <path d="M656,206L661,213L664,216L660,208Z" fill="#d0a88c" />
          <g clip-path="url(#laststage)">
            <g fill="#bcb8b4">
              <path d="M950,366L960,370L986,361L973,384L966,403L944,400L922,396L921,391L935,392L948,389L949,384L925,387L921,383L948,376Z" />
              <path d="M908,381L952,355L941,363L929,372L912,382Z" />
              <path d="M906,407L921,403L926,410L907,419ZM890,369L894,382L891,390L889,380Z" opacity=".75" />
              <path d="M888,392L868,412L884,400ZM890,397L878,414L886,404Z" opacity=".55" />
              <path d="M926,434L932,432L916,455L909,467L890,495L882,500L880,492L891,488L895,477L889,468L876,461L884,452L903,445Z" />
              <path d="M972,386L990,389L979,393L968,408L963,406ZM935,412L960,420L950,426L942,414Z" opacity=".85" />
            </g>
            <!-- Orange shows through the grey in fine slivers -->
            <g fill="none" stroke="#ff8000" stroke-width=".7">
              <path d="M969,375H978M968,378H978M970,381H976M967,384H974M967,390H973M966,393H970" />
              <path d="M918,440L896,452M922,437L904,449M914,449L900,458" opacity=".6" />
            </g>
            <g fill="none" stroke="#e09c58" stroke-width=".6">
              <path d="M918,350H938M920,353H940M922,356H936M924,359H934M921,362H932" />
            </g>
            <path d="M891,334L925,371" stroke="#d9ad84" stroke-width=".9" stroke-dasharray="6 1" />
            <path d="M919,434L840,448M925,433L862,447M852,440L832,462M816,473L829,464L826,474" fill="none" stroke="#d8ab7c" stroke-width=".8" opacity=".8" />
            <path d="M900,458L911,447L906,462Z" fill="#3cd864" />
            <path d="M835,430L916,455.700M829,440L910,466" stroke="#30382c" stroke-width=".7" />
          </g>
          <g fill="#c4bcae" opacity=".7">
            <path d="M949,319L954,318L958,329L951,343L940,340L946,330ZM961,318L969,312L965,327Z" />
          </g>

          <path d="M274,119L438,170L363,300L200,249Z" fill="none" stroke="#c2d6e6" stroke-width=".9" stroke-dasharray="2.500 2" />

          <!-- Work plane triad -->
          <g fill="none" stroke-width="1.300">
            <path d="M318,209L316,184" stroke="#249ba0" />
            <path d="M313.500,185L316,179L318.500,185Z" fill="#2cb8bc" stroke="none" />
            <path d="M318,209L329,190" stroke="#28b83c" />
            <path d="M326,190L332,186L331,193Z" fill="#30d440" stroke="none" />
            <path d="M318,209L334,213" stroke="#c03040" />
            <path d="M333,210.500L338.500,215L332,216Z" fill="#d02840" stroke="none" />
            <path d="M331,181L333,183.500L336,181.500" stroke="#c85068" stroke-width=".8" />
          </g>

          <!-- Orientation triad -->
          <g fill="none">
            <path d="M75,625L81,613L83,624L75,635Z" fill="#738b94" fill-opacity=".5" stroke="#a2b4ba" stroke-width=".7" />
            <path d="M78,624L96,628L90,638L74,634Z" fill="#88a044" fill-opacity=".8" stroke="#d0dc48" stroke-width=".9" />
            <path d="M76,628L88,630L90,638" stroke="#b6c4a0" stroke-width=".7" />
            <path d="M74,635L71.500,611" stroke="#189898" stroke-width="1.500" />
            <path d="M69,611L71.500,605L74.500,611Z" fill="#18c0c0" />
            <path d="M74,635L84,618" stroke="#28cc30" stroke-width="1.400" />
            <path d="M82,618L88.500,611L87,621Z" fill="#28dc30" />
            <path d="M75,635L89,639" stroke="#d01c1c" stroke-width="2" />
            <path d="M88,636.500L94,640.500L87,642Z" fill="#e01c1c" />
            <circle cx="74" cy="635" r="1.800" fill="#8a9a9c" />
          </g>
          <g class="axis">
            <text x="69" y="605" fill="#d4dede">Z</text>
            <text x="87" y="612" fill="#a83a38">Y</text>
            <text x="96" y="645" fill="#d4dede">X</text>
          </g>
        </svg>

        <div v-if="dialogOpen" class="dialog">
          <div class="dialog-title">Delete all the database</div>
          <div class="dialog-body">
            <span class="question">?</span>
            <p>Are you sure?</p>
          </div>
          <div class="dialog-foot">
            <button class="primary" @click="dialogOpen = false">Sim</button>
            <button @click="dialogOpen = false">Não</button>
          </div>
        </div>
      </div>
    </main>

    <footer class="status">
      <div class="row">
        <div class="search">
          <svg width="8" height="8" viewBox="0 0 8 8"><circle cx="4.800" cy="3" r="2.200" fill="none" stroke="#667080" stroke-width=".8" /><path d="M3.300,4.700L.8,7.300" stroke="#667080" /></svg>
        </div>
        <span class="c-abs">Absolut&nbsp; XY Top</span>
        <span class="c-view">View ABS</span>
        <b class="c-layer">LAYER1</b>
        <div class="swatches"><i /><i /><i /></div>
        <svg class="globe" width="10" height="10" viewBox="0 0 10 10"><path d="M5,1L9,3V7L5,9.500L1,7V3Z" fill="#163a68" /><circle cx="6.500" cy="4" r="1.800" fill="#4a90bc" /><path d="M1,3L4,5V8L1,7Z" fill="#206c50" /></svg>
      </div>
      <div class="row second">
        <span class="toggle">Toggle</span>
        <div class="status-icons">
          <span v-for="s in statusIcons" :key="s"><svg class="ic"><use :href="'#' + s" /></svg></span>
        </div>
        <span class="c-ls">LS: 1.00 PS: 1.00</span>
        <span class="c-units">Units: MM</span>
        <span class="c-pos"><em>X =-0127.284</em> Y = 0036.360 Z = 0000.000</span>
      </div>
    </footer>

    <div class="taskbar">
      <div class="tasks">
        <div v-for="(t, i) in tasks" :key="i" class="task" :class="t.state">
          <svg width="22" height="22"><use :href="'#' + t.icon" /></svg>
          <span v-if="t.num" class="num">{{ t.num }}</span>
        </div>
      </div>
      <svg class="tray" width="72" height="14" viewBox="0 0 72 14">
        <path d="M3,8.500L5.500,6L8,8.500Z" fill="#fff" />
        <rect x="15.500" y="2" width="10.500" height="10" rx="1.500" fill="#d6202c" />
        <path d="M18,9.500Q17,5 20.500,5Q23,5 22,8L21.500,9.500H24M18.500,7.500L24,4" fill="none" stroke="#fff" stroke-width="1.100" />
        <path d="M31,3V6Q32.500,8 34,6V3M32.500,7V11" fill="none" stroke="#f0f4f6" stroke-width="1.200" />
        <rect x="35.500" y="3" width="4" height="8" fill="#e8eef0" stroke="#fff" />
        <path d="M47,11V9M49.500,11V7M52,11V5M54.500,11V3" stroke="#a8b8c0" stroke-width="1.400" />
        <path d="M46,4h3v3h-3z" fill="#e8eef2" />
        <path d="M61,5.500H63L66,3V11L63,8.500H61Z" fill="#fff" />
        <path d="M67.500,5Q69,7 67.500,9M69,3.500Q71.500,7 69,10.500" fill="none" stroke="#fff" stroke-width=".8" />
      </svg>
      <div class="clock"><span>15:31</span><span>19/02/2016</span></div>
    </div>
  </div>
</template>

<style>
body {
  margin: 0;
  overflow: hidden;
}
</style>

<style scoped>
.screen {
  width: 1280px;
  height: 720px;
  display: flex;
  flex-direction: column;
  overflow: hidden;
  background: #d9dcee;
  color: #303238;
  font-family: 'Open Sans', 'Noto Sans', sans-serif;
  font-size: 7.3px;
  line-height: 12px;
  white-space: nowrap;
}

.defs {
  position: absolute;
}

.ic {
  width: 13px;
  height: 13px;
  flex: none;
  display: block;
}

/* Title bar */
.titlebar {
  display: flex;
  align-items: center;
  height: 14px;
  background: #f0eff1;
}

.brand {
  margin: 1px 0 0 0;
}

.rule {
  width: 1px;
  height: 8px;
  background: #b8b8bc;
}

.quick {
  display: flex;
  gap: 1.95px;
  margin: 2px 0 0 4px;
}

.more {
  margin: 0 6px 0 4px;
  font-size: 7px;
}

h1 {
  flex: 1;
  margin: 2px 0 0 385px;
  font-size: 9.08px;
  font-weight: 400;
  color: #3a3a3e;
}

.winbtns {
  flex: none;
}

/* Menu */
.menubar {
  display: flex;
  height: 13px;
}

.menubar span {
  flex: none;
  text-align: center;
  line-height: 13px;
}

.menubar .active {
  background: #ffeb9a;
  box-shadow: inset 0 0 0 1px #f0d88a;
}

.childbtns {
  margin-left: auto;
}

/* Ribbon */
.ribbon {
  display: flex;
  height: 41px;
}

.edge {
  width: 5px;
  background: #445f8d;
}

.ribbon-body {
  flex: 1;
}

.tabs {
  display: flex;
  height: 12px;
  margin: 1px 0 0 2px;
}

.tabs span {
  box-sizing: border-box;
  flex: none;
  height: 12px;
  line-height: 11px;
  text-align: center;
  background: #eef3fa;
  border-right: 1px solid #a8b4c8;
  border-bottom: 1px solid #c2cadc;
}

.tabs .drop {
  width: 12px;
  border-left: 1px solid #a8b4c8;
}

.tabs .active {
  background: #a5cef2;
  font-weight: 700;
  border-bottom-color: #a5cef2;
  color: #1c2c48;
}

.groups {
  display: flex;
  margin-left: 3px;
}

.group {
  box-sizing: border-box;
  height: 28px;
  border-left: 1px dotted #9aa0b4;
  padding-left: 2px;
}

.group:first-child {
  padding-left: 3px;
}

.tools {
  display: flex;
  height: 17px;
  align-items: center;
}

.tool {
  flex: none;
  width: 16.25px;
  height: 15px;
  display: flex;
  align-items: center;
  justify-content: center;
}

.tool .ic {
  width: 14px;
  height: 14px;
}

.tool.on {
  background: #ffe678;
  box-shadow: inset 0 0 0 1px #ecc850;
}

.caption {
  height: 10px;
  line-height: 10px;
  padding-right: 8px;
  text-align: center;
  color: #80848f;
}

/* Work area */
.work {
  display: flex;
  height: 604px;
}

.side {
  width: 38px;
  flex: none;
  box-sizing: border-box;
  border-top: 4px solid #51698f;
  background: #d9dcee;
}

.side-tools {
  display: grid;
  grid-template-columns: 16px 16px;
  grid-auto-rows: 16.2px;
  align-items: center;
  justify-items: center;
  margin-top: 3px;
  padding: 5px 0 6px 3px;
  border-top: 1px dashed #fafaff;
  border-bottom: 1px dashed #b4b8c8;
}

.viewport {
  position: relative;
  flex: 1;
  background: linear-gradient(#03407c, #05394f 66%, #043d3d);
}

.viewport > svg {
  display: block;
}

.axis {
  font-size: 7px;
}

/* Dialog */
.dialog {
  position: absolute;
  left: 483px;
  top: 216px;
  width: 228px;
  height: 88px;
  box-sizing: border-box;
  padding: 0 5px 5px;
  background: #68c2f6;
  box-shadow: inset 0 0 0 1px #58b0e4;
  display: flex;
  flex-direction: column;
}

.dialog-title {
  height: 19px;
  line-height: 20px;
  text-align: center;
  font-size: 9px;
  color: #2e4a62;
}

.dialog-body {
  display: flex;
  height: 38px;
  background: #fff;
  padding-left: 6px;
}

.question {
  width: 19px;
  height: 19px;
  margin-top: 7px;
  border-radius: 50%;
  background: #1c6ebc;
  color: #fff;
  font-size: 15px;
  font-weight: 700;
  line-height: 19px;
  text-align: center;
}

.dialog-body p {
  margin: 8px 0 0 7px;
  font-size: 9.4px;
  color: #2c4b82;
}

.dialog-foot {
  flex: 1;
  display: flex;
  align-items: center;
  justify-content: flex-end;
  gap: 4px;
  padding: 0 6px 1px 0;
  background: #f2f1f3;
  border-top: 1px solid #e2e2e4;
}

.dialog-foot button {
  width: 42px;
  height: 14px;
  padding: 0;
  border: 1px solid #b4b4b8;
  background: linear-gradient(#f4f4f4, #e4e4e6);
  font: 7.3px/11px 'Open Sans', 'Noto Sans', sans-serif;
  color: #333;
}

.dialog-foot .primary {
  border-color: #5a9cd4;
}

/* Status bar */
.status {
  height: 24px;
  background: #dcdfee;
}

.row {
  display: flex;
  align-items: center;
  height: 11px;
  line-height: 11px;
  padding-left: 932px;
  border-bottom: 1px solid #b6bac6;
}

.row.second {
  height: 12px;
  padding-left: 805px;
  border-bottom: 0;
}

.search {
  width: 77px;
  height: 10px;
  display: flex;
  align-items: center;
  justify-content: flex-end;
  background: #fff;
}

.c-abs {
  width: 67px;
  margin-left: 7px;
}

.c-view {
  width: 43px;
}

.c-layer {
  width: 35px;
  color: #181a20;
}

.swatches {
  display: flex;
  gap: 7px;
  margin-left: 21px;
}

.swatches i {
  width: 20px;
  height: 7px;
  background: #054344;
}

.globe {
  margin-left: 7px;
}

.toggle {
  width: 33px;
  font-size: 7.6px;
}

.status-icons {
  display: flex;
}

.status-icons span {
  box-sizing: border-box;
  width: 19.3px;
  display: flex;
  justify-content: center;
  border-left: 1px solid #c2c6d4;
}

.status-icons .ic {
  width: 12px;
  height: 12px;
}

.c-ls {
  width: 71px;
  margin-left: 6px;
}

.c-units {
  width: 50px;
}

.c-pos em {
  font-style: normal;
  color: #e83a44;
}

/* Taskbar */
.taskbar {
  display: flex;
  height: 24px;
  background: linear-gradient(90deg, #2a4a60, #2d5a74 20%, #2f6c8b 35%, #2f6e90 68%, #35586f 86%, #2c4654);
}

.tasks {
  display: flex;
  margin-left: -5px;
}

.task {
  position: relative;
  box-sizing: border-box;
  width: 37px;
  height: 24px;
  margin-right: 1.3px;
  display: flex;
  align-items: center;
  justify-content: center;
}

.task.open {
  background: rgba(160, 190, 205, 0.24);
  box-shadow: inset 0 0 0 1px rgba(190, 215, 225, 0.3);
}

.task.focus {
  background: rgba(200, 220, 228, 0.55);
  box-shadow: inset 0 0 0 1px rgba(225, 238, 242, 0.6);
}

.num {
  position: absolute;
  right: 8px;
  bottom: 0;
  font: 700 8.5px/9px 'Liberation Sans', sans-serif;
  color: #000;
}

.tray {
  margin: 5px -1px 0 auto;
}

.clock {
  width: 60px;
  display: flex;
  flex-direction: column;
  align-items: center;
  line-height: 10.5px;
  padding: 2px 0 0;
  color: #f2f6f8;
}
</style>
